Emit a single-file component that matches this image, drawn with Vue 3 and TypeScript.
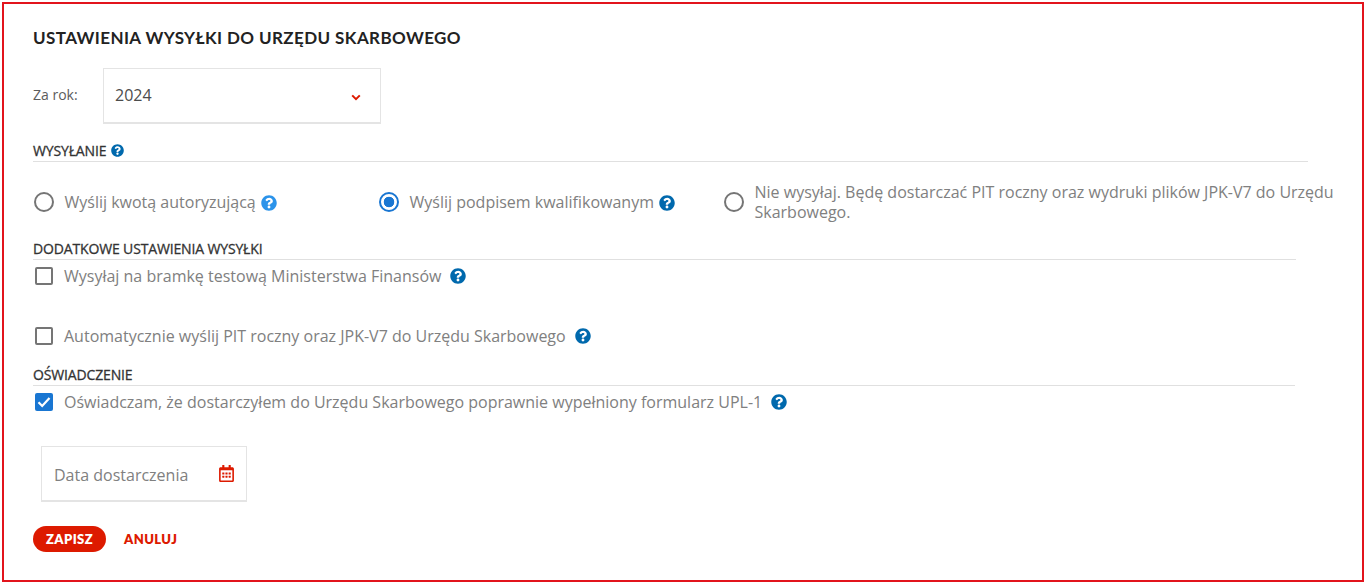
<script setup lang="ts">
const helpPath = "M504 256c0 136.997-111.043 248-248 248S8 392.997 8 256C8 119.083 119.043 8 256 8s248 111.083 248 248zM262.655 90c-54.497 0-89.255 22.957-116.549 63.758-3.536 5.286-2.353 12.415 2.715 16.258l34.699 26.31c5.205 3.947 12.621 3.008 16.665-2.122 17.864-22.658 30.113-35.797 57.303-35.797 20.429 0 45.698 13.148 45.698 32.958 0 14.976-12.363 22.667-32.534 33.976C247.128 238.528 216 254.941 216 296v4c0 6.627 5.373 12 12 12h56c6.627 0 12-5.373 12-12v-1.333c0-28.462 83.186-29.647 83.186-106.667 0-58.002-60.165-102-116.531-102zM256 338c-25.365 0-46 20.635-46 46 0 25.364 20.635 46 46 46s46-20.636 46-46c0-25.365-20.635-46-46-46z";
const calPath = "M148 288h-40c-6.6 0-12-5.4-12-12v-40c0-6.6 5.4-12 12-12h40c6.6 0 12 5.4 12 12v40c0 6.6-5.4 12-12 12zm108-12v-40c0-6.6-5.4-12-12-12h-40c-6.6 0-12 5.4-12 12v40c0 6.6 5.4 12 12 12h40c6.6 0 12-5.4 12-12zm96 0v-40c0-6.6-5.4-12-12-12h-40c-6.6 0-12 5.4-12 12v40c0 6.6 5.4 12 12 12h40c6.6 0 12-5.4 12-12zm-96 96v-40c0-6.6-5.4-12-12-12h-40c-6.6 0-12 5.4-12 12v40c0 6.6 5.4 12 12 12h40c6.6 0 12-5.4 12-12zm-96 0v-40c0-6.6-5.4-12-12-12h-40c-6.6 0-12 5.4-12 12v40c0 6.6 5.4 12 12 12h40c6.6 0 12-5.4 12-12zm192 0v-40c0-6.6-5.4-12-12-12h-40c-6.6 0-12 5.4-12 12v40c0 6.6 5.4 12 12 12h40c6.6 0 12-5.4 12-12zm96-260v352c0 26.5-21.5 48-48 48H48c-26.5 0-48-21.5-48-48V112c0-26.5 21.5-48 48-48h48V12c0-6.6 5.4-12 12-12h40c6.6 0 12 5.4 12 12v52h128V12c0-6.6 5.4-12 12-12h40c6.6 0 12 5.4 12 12v52h48c26.5 0 48 21.5 48 48zm-48 346V160H48v298c0 3.3 2.7 6 6 6h340c3.3 0 6-2.7 6-6z";
</script>

<template>
  <div class="frame">
    <h1 class="title">USTAWIENIA WYSYŁKI DO URZĘDU SKARBOWEGO</h1>

    <div class="year-row">
      <span class="year-label">Za rok:</span>
      <div class="field year-field">
        <span class="year-value">2024</span>
        <svg class="chev" width="10" height="7" viewBox="0 0 10 7"><path d="M1.2 1.4 5 5.2l3.8-3.8" fill="none" stroke="#dd1a00" stroke-width="2"/></svg>
      </div>
    </div>

    <div class="head head-send">
      <span>WYSYŁANIE</span>
      <svg class="help head-help" viewBox="0 0 512 512"><path :d="helpPath" fill="#0069ad"/></svg>
    </div>

    <div class="radios">
      <div class="radio-item">
        <span class="radio"></span>
        <span class="opt">Wyślij kwotą autoryzującą<svg class="help light inline" viewBox="0 0 512 512"><path :d="helpPath" fill="#2b93ea"/></svg></span>
      </div>
      <div class="radio-item">
        <span class="radio on"></span>
        <span class="opt">Wyślij podpisem kwalifikowanym<svg class="help inline" viewBox="0 0 512 512"><path :d="helpPath" fill="#0069ad"/></svg></span>
      </div>
      <div class="radio-item">
        <span class="radio"></span>
        <span class="opt">Nie wysyłaj. Będę dostarczać PIT roczny oraz wydruki plików JPK-V7 do Urzędu Skarbowego.</span>
      </div>
    </div>

    <div class="head head-extra"><span>DODATKOWE USTAWIENIA WYSYŁKI</span></div>
    <div class="check-row first">
      <span class="box"></span>
      <span class="opt">Wysyłaj na bramkę testową Ministerstwa Finansów</span>
      <svg class="help check-help" viewBox="0 0 512 512"><path :d="helpPath" fill="#0069ad"/></svg>
    </div>
    <div class="check-row second">
      <span class="box"></span>
      <span class="opt">Automatycznie wyślij PIT roczny oraz JPK-V7 do Urzędu Skarbowego</span>
      <svg class="help check-help" viewBox="0 0 512 512"><path :d="helpPath" fill="#0069ad"/></svg>
    </div>

    <div class="head head-decl"><span>OŚWIADCZENIE</span></div>
    <div class="check-row first">
      <span class="box on">
        <svg width="14" height="12" viewBox="0 0 14 12"><path d="M1.5 6.2 5.2 10l7.3-8" fill="none" stroke="#fff" stroke-width="2.2"/></svg>
      </span>
      <span class="opt">Oświadczam, że dostarczyłem do Urzędu Skarbowego poprawnie wypełniony formularz UPL-1</span>
      <svg class="help check-help" viewBox="0 0 512 512"><path :d="helpPath" fill="#0069ad"/></svg>
    </div>

    <div class="field date-field">
      <span class="date-text">Data dostarczenia</span>
      <svg class="cal" viewBox="0 0 448 512"><path :d="calPath" fill="#dd1a00"/></svg>
    </div>

    <div class="actions">
      <button class="save" type="button">ZAPISZ</button>
      <button class="cancel" type="button">ANULUJ</button>
    </div>
  </div>
</template>

<style>
html, body { margin: 0; background: #fff; }
</style>

<style scoped>
.frame {
  box-sizing: border-box;
  width: 1362px;
  height: 580px;
  margin: 2px 0 0 2px;
  border: 2px solid #e2141c;
  padding: 0 0 0 29px;
  font-family: "Open Sans", sans-serif;
  background: #fff;
  overflow: hidden;
}
.title {
  margin: 0;
  padding-top: 24px;
  font: 700 17px/20px Lato, sans-serif;
  letter-spacing: 0.4px;
  color: #222;
}
.year-row {
  display: flex;
  align-items: center;
  margin-top: 20px;
}
.year-label {
  width: 70px;
  font-size: 14px;
  line-height: 20px;
  margin-top: -2px;
  color: #5c5c5c;
}
.field {
  box-sizing: border-box;
  display: flex;
  align-items: center;
  justify-content: space-between;
  border: 1px solid #e4e4e4;
  border-bottom-width: 2px;
}
.year-field {
  width: 278px;
  height: 56px;
  padding: 0 19px 0 11px;
}
.year-value {
  font-size: 16px;
  line-height: 20px;
  margin-top: -2px;
  color: #4c4c4c;
}
.chev { margin-top: 3px; }
.head {
  display: flex;
  align-items: center;
  font-size: 14px;
  line-height: 18px;
  font-weight: 400;
  -webkit-text-stroke: 0.3px #333;
  color: #333;
  letter-spacing: -0.15px;
  border-bottom: 1px solid #e0e0e0;
  padding-bottom: 1px;
}
.head-send { margin-top: 17px; width: 1275px; height: 21px; box-sizing: border-box; }
.head-extra { margin-top: 18px; width: 1263px; }
.head-decl { margin-top: 20px; width: 1262px; }
.help { width: 16px; height: 16px; flex: none; }
.head-help { width: 13px; height: 13px; margin-left: 5px; }
.radios {
  display: grid;
  grid-template-columns: 345px 345px 625px;
  margin-top: 20px;
}
.radio-item {
  display: flex;
  align-items: center;
}
.radio {
  box-sizing: border-box;
  flex: none;
  width: 20px;
  height: 20px;
  margin: 0 10.5px 0 1px;
  border: 2px solid #757575;
  border-radius: 50%;
}
.radio.on {
  border-color: #1976d2;
  background: radial-gradient(circle, #1976d2 0 5px, transparent 5.6px);
}
.opt {
  font-size: 16px;
  line-height: 20px;
  color: #808080;
}
.inline {
  vertical-align: -3px;
  margin-left: 5px;
}
.check-row {
  display: flex;
  align-items: center;
  height: 20px;
}
.check-row.first { margin-top: 6px; }
.check-row.second { margin-top: 40px; }
.box {
  box-sizing: border-box;
  flex: none;
  display: flex;
  align-items: center;
  justify-content: center;
  width: 18px;
  height: 18px;
  margin: 0 11px 0 2px;
  border: 2px solid #757575;
  border-radius: 2px;
}
.box.on {
  border: 0;
  background: #1976d2;
}
.check-help { margin-left: 9px; }
.date-field {
  width: 206px;
  height: 56px;
  margin: 34px 0 0 8px;
  padding: 0 12px 0 12px;
}
.date-text {
  font-size: 16px;
  line-height: 20px;
  margin-top: 3px;
  color: #808080;
}
.cal { width: 15px; height: 17px; margin-top: -1px; }
.actions {
  display: flex;
  align-items: center;
  margin-top: 24px;
}
button {
  border: 0;
  padding: 0;
  background: none;
  font: 800 13px/16px Lato, sans-serif;
  letter-spacing: 0.4px;
  cursor: pointer;
}
.save {
  width: 73px;
  height: 26px;
  border-radius: 13px;
  background: #dd1a00;
  color: #fff;
}
.cancel {
  margin-left: 18px;
  color: #dd1a00;
}
</style>
